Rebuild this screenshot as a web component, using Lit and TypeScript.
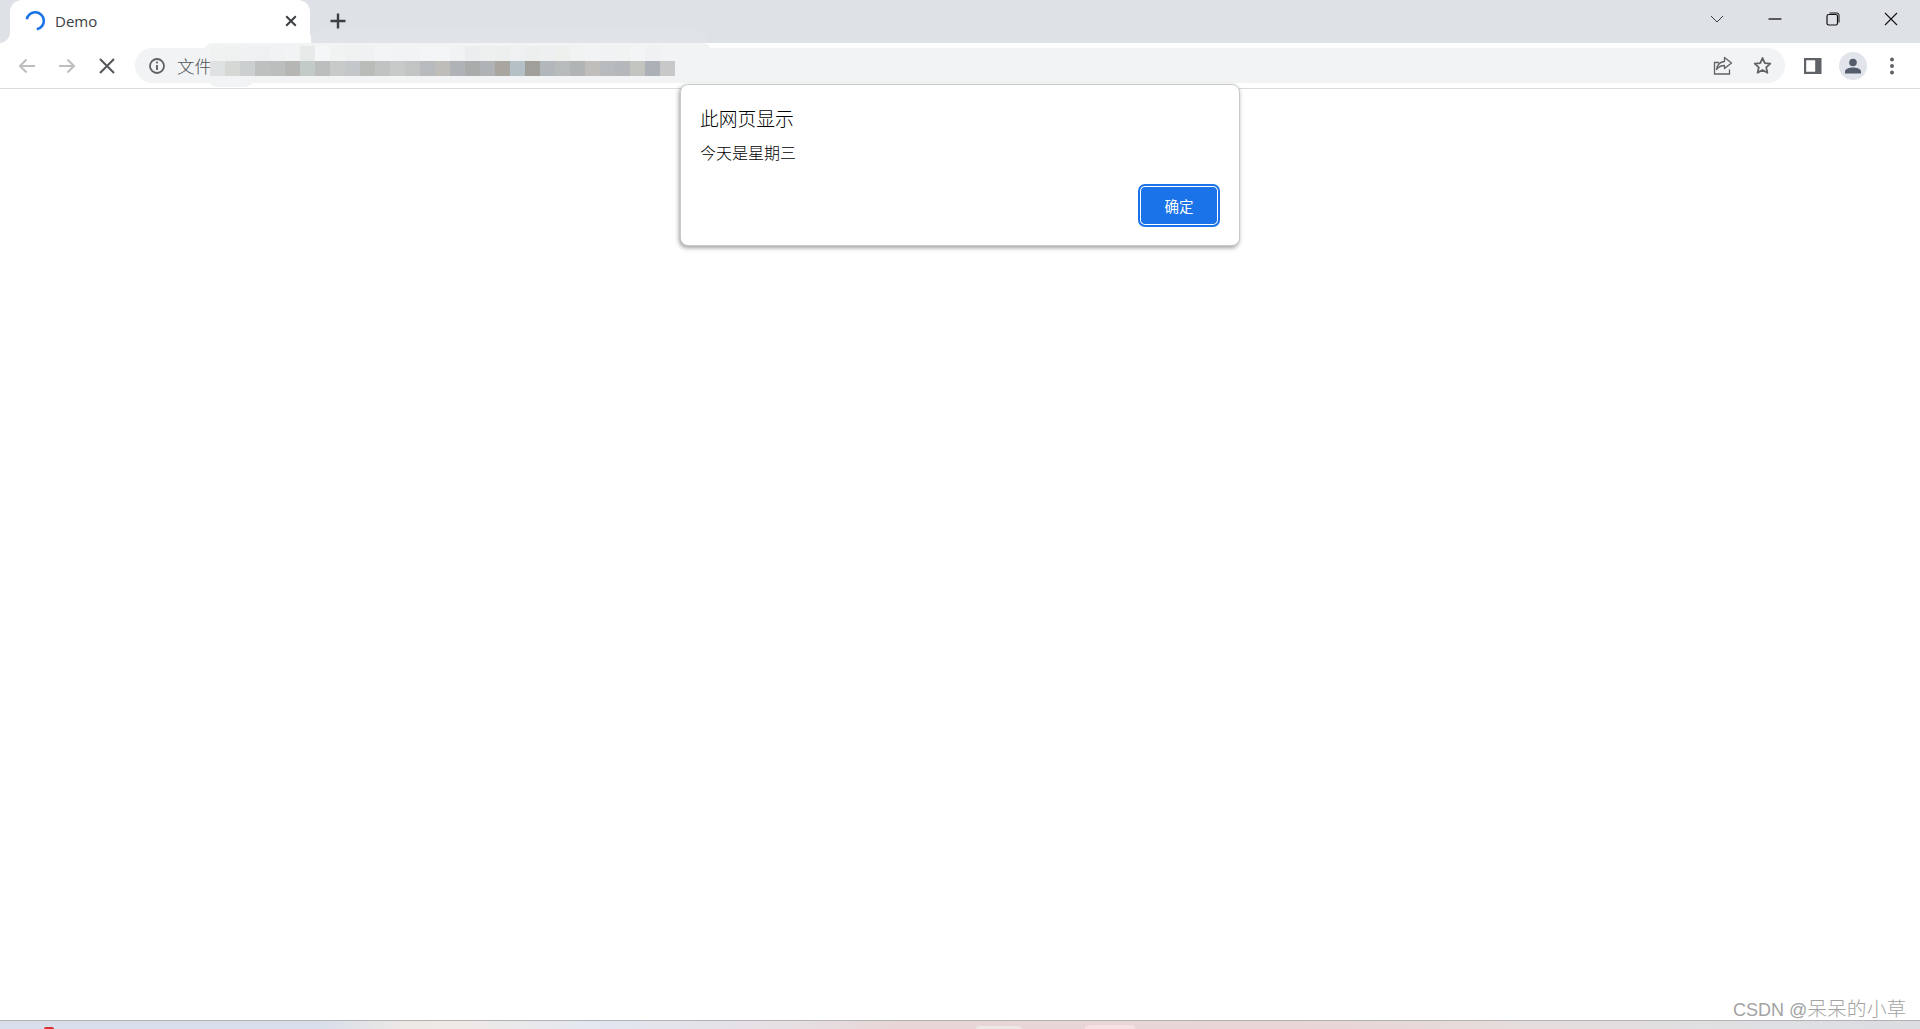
import { LitElement, html, css, svg } from "lit";
import { customElement } from "lit/decorators.js";

const LOWER = ["dfe2e2","d6d8d6","cbcfcf","bdc0be","bcbebe","b6b7b5","c3cbc8","bcbebe","c8caca","c3c7c9","babcba","c1c3c3","c8c9c9","c2c4c3","b8bbbd","bfbdba","afb3b7","aaacac","afb3b6","a8a69f","b5bfc6","a09f9a","b1b7ba","b7bbbb","b1b4b5","c0bebb","b8bbbe","b5b8bb","c2c4c0","acb0b7","c8c8c8"];
const UPPER = ["f0f2f2","eff1f1","eff1f2","eff0f1","f1f2f3","f2f3f4","e8eaea","f5f6f7","f1f3f2","eff1f1","eff1f2","f3f4f5","f2f3f4","f2f3f4","f4f5f6","f4f5f6","f1f2f3","ebedee","eef0f0","edefee","eef0f1","edefee","eeeff0","eef0ee","f1f3f2","f1f3f4","f1f2f3","f1f3f2","f3f4f5","f0f1f2","f1f3f4"];

@customElement("app-root")
export class AppRoot extends LitElement {
  static styles = css`
    :host { display: block; width: 1920px; height: 1029px; position: relative; overflow: hidden; background: #fff; }
    .root { display: flex; flex-direction: column; height: 1029px; font-family: "Open Sans", "Noto Sans CJK SC", sans-serif; }
    svg { display: block; flex: none; }
    .strip { height: 43px; flex: none; background: #dee1e6; display: flex; padding-left: 10px; box-sizing: border-box; }
    .tab { width: 300px; height: 43px; background: #fff; border-radius: 12px 12px 0 0; position: relative; display: flex; align-items: center; padding: 0 11px 1px 14px; box-sizing: border-box; gap: 9px; }
    .tab::before, .tab::after { content: ""; position: absolute; bottom: 0; width: 10px; height: 10px; }
    .tab::before { left: -10px; background: radial-gradient(circle at 0 0, #dee1e6 9.5px, #fff 10px); }
    .tab::after { right: -10px; background: radial-gradient(circle at 100% 0, #dee1e6 9.5px, #fff 10px); }
    .title { flex: 1; font-size: 15px; color: #3c4043; }
    .plus { margin-left: 19px; margin-top: 12px; }
    .winctl { margin-left: auto; display: flex; align-items: center; height: 38px; padding-right: 22px; gap: 44px; }
    .chev { margin-right: 0; }
    .toolbar { height: 45px; flex: none; background: #fff; display: flex; align-items: center; padding: 0 0 0 15px; box-sizing: border-box; }
    .nav { display: flex; gap: 16px; align-items: center; }
    .omni { margin-left: 16px; width: 1650px; height: 35px; background: #f1f3f4; border-radius: 18px; display: flex; align-items: center; padding: 0 0 0 13px; box-sizing: border-box; }
    .scheme { margin-left: 11px; font-size: 17.5px; color: #4f5357; font-family: "Noto Sans CJK SC", sans-serif; font-weight: 300; }
    .omni-end { margin-left: auto; display: flex; align-items: center; gap: 20px; padding-right: 13px; }
    .tools { display: flex; align-items: center; margin-left: 18px; }
    .avatar { margin-left: 16px; width: 28px; height: 28px; border-radius: 50%; background: #e1e4ea; display: flex; align-items: center; justify-content: center; }
    .dots { margin-left: 22px; }
    .rule { height: 1px; flex: none; background: #d9dadc; }
    .page { flex: 1; background: #fff; }
    .taskbar { height: 9px; flex: none; box-sizing: border-box; border-top: 1px solid #b3b3b5; position: relative; overflow: hidden;
      background: linear-gradient(90deg, #d8deea 0, #d8deea 320px, #ece8e6 400px, #f0eae6 450px, #e3e7f1 600px, #e6e0e4 780px, #e8d6d6 900px, #e9d5d5 1300px, #e6dcdc 1500px, #dfe0e3 1750px, #dcdde0 1920px); }
    .pin { position: absolute; border-radius: 4px 4px 0 0; }
    .pin.red { left: 44px; width: 10px; top: 6px; height: 2px; background: #d9352c; border-radius: 2px 2px 0 0; }
    .pin.a { left: 976px; width: 46px; top: 5px; height: 4px; background: #efe7e6; }
    .pin.b { left: 1085px; width: 50px; top: 4px; height: 5px; background: #f8e1e3; }
    .smear { position: absolute; }
    .smear.s1 { left: 311px; top: 30px; width: 395px; height: 13px; background: #e0e3e7; border-radius: 8px 8px 0 0; }
    .smear.s2 { left: 205px; top: 43px; width: 505px; height: 12px; background: #f1f3f4; border-radius: 6px; }
    .smear.s4 { left: 207px; top: 76px; width: 48px; height: 11px; background: #f1f3f4; border-radius: 0 0 14px 14px; }
    .smear.s3 { left: 210px; top: 46px; display: grid; grid-template-columns: repeat(31, 15px); grid-auto-rows: 15px; }
    .dialog { position: absolute; left: 680px; top: 84px; width: 560px; height: 162px; box-sizing: border-box; background: #fff; border-radius: 8px; border: 1px solid #c9cacc; box-shadow: -1px 2px 4px rgba(60,64,67,.5); padding: 20px 19px 18px 19px; display: flex; flex-direction: column; font-family: "Noto Sans CJK SC", sans-serif; color: #000; font-weight: 300; }
    .dlg-title { font-size: 18.8px; line-height: 26px; }
    .dlg-body { font-size: 16px; line-height: 22px; margin-top: 10px; }
    .dlg-actions { margin-top: auto; display: flex; justify-content: flex-end; }
    .ok { width: 78px; height: 39px; box-sizing: border-box; padding: 0; background: #1a73e8; color: #fff; border: 1px solid #fff; outline: 2px solid #1a73e8; outline-offset: 0; border-radius: 5px; font: 400 14.5px "Noto Sans CJK SC", sans-serif; margin: 0 2px 2px 0; }
    .mark { position: absolute; left: 1733px; top: 996px; font-size: 19.8px; line-height: 24px; color: #a3a3a3; font-family: "Noto Sans CJK SC", sans-serif; font-weight: 300; text-shadow: 0 0 1px #fff; }
    .mark .latin { font-family: "Liberation Sans", sans-serif; font-size: 18px; }
  `;

  private icon(w: number, h: number, body: unknown) {
    return html`<svg width=${w} height=${h} viewBox="0 0 ${w} ${h}" fill="none">${body}</svg>`;
  }

  render() {
    return html`
      <div class="root">
        <div class="strip">
          <div class="tab">
            ${this.icon(22, 22, svg`<path d="M2.800 9.200A8.600 8.600 0 1 1 12.800 19.300" stroke="#1a73e8" stroke-width="2.600"/>`)}
            <span class="title">Demo</span>
            ${this.icon(16, 16, svg`<path d="M3.200 3.200l9.600 9.600M12.800 3.200l-9.600 9.600" stroke="#3c4043" stroke-width="2"/>`)}
          </div>
          <div class="plus">${this.icon(18, 18, svg`<path d="M9 1.500v15M1.500 9h15" stroke="#3c4043" stroke-width="2.400"/>`)}</div>
          <div class="winctl">
            ${this.icon(14, 10, svg`<path d="M1 2l6 6 6-6" stroke="#3a3c3f" stroke-width="1"/>`)}
            ${this.icon(14, 4, svg`<path d="M0.500 2h13" stroke="#111" stroke-width="1.300"/>`)}
            ${this.icon(14, 14, svg`<rect x="1" y="2.500" width="10.500" height="10.500" rx="1.800" stroke="#111" stroke-width="1.200"/><path d="M3.500 1h7.500a2 2 0 0 1 2 2v7.500" stroke="#111" stroke-width="1"/>`)}
            ${this.icon(14, 14, svg`<path d="M1 1l12 12M13 1L1 13" stroke="#111" stroke-width="1.100"/>`)}
          </div>
        </div>

        <div class="toolbar">
          <div class="nav">
            ${this.icon(24, 24, svg`<path d="M20 12H5M11.500 5.500L5 12l6.500 6.500" stroke="#bcbec0" stroke-width="2"/>`)}
            ${this.icon(24, 24, svg`<path d="M4 12h15M12.500 5.500L19 12l-6.500 6.500" stroke="#bcbec0" stroke-width="2"/>`)}
            ${this.icon(24, 24, svg`<path d="M5 5l14 14M19 5L5 19" stroke="#55585c" stroke-width="2.100"/>`)}
          </div>
          <div class="omni">
            ${this.icon(18, 18, svg`<circle cx="9" cy="9" r="7" stroke="#5f6368" stroke-width="1.800"/><path d="M9 8v5" stroke="#5f6368" stroke-width="1.900"/><circle cx="9" cy="5.500" r="1.100" fill="#5f6368"/>`)}
            <span class="scheme">文件</span>
            <div class="omni-end">
              ${this.icon(20, 20, svg`<path d="M16.500 13.500v4.500H1.500V6.500H6" stroke="#5f6368" stroke-width="1.300"/><path d="M11.500 1.500l7 5.500-7 5.500V9.500c-3.500 0-6 1.200-8 4 .6-4.300 3.500-7.500 8-8z" stroke="#5f6368" stroke-width="1.300" stroke-linejoin="round"/>`)}
              ${this.icon(19, 19, svg`<path d="M9.500 2l2.300 5.100 5.500.6-4.100 3.700 1.200 5.400-4.900-2.800-4.900 2.800 1.200-5.400L1.700 7.700l5.500-.6z" stroke="#5f6368" stroke-width="1.800" stroke-linejoin="round"/>`)}
            </div>
          </div>
          <div class="tools">
            ${this.icon(20, 18, svg`<path fill-rule="evenodd" d="M1 1h17.500v16H1zM3.200 3.200v11.600h9V3.200z" fill="#5f6368"/>`)}
            <div class="avatar">
              ${this.icon(18, 16, svg`<circle cx="9" cy="4.500" r="3.800" fill="#535d6b"/><path d="M1 15.500v-2c0-2.700 4.700-4 8-4s8 1.300 8 4v2z" fill="#535d6b"/>`)}
            </div>
            <div class="dots">
              ${this.icon(6, 18, svg`<circle cx="3" cy="2.500" r="2" fill="#5f6368"/><circle cx="3" cy="9" r="2" fill="#5f6368"/><circle cx="3" cy="15.500" r="2" fill="#5f6368"/>`)}
            </div>
          </div>
        </div>

        <div class="rule"></div>
        <div class="page"></div>
        <div class="taskbar">
          <div class="pin red"></div>
          <div class="pin a"></div>
          <div class="pin b"></div>
        </div>
      </div>

      <div class="smear s1"></div>
      <div class="smear s2"></div>
      <div class="smear s4"></div>
      <div class="smear s3">
        ${UPPER.map((c) => html`<div style="background:#${c}"></div>`)}
        ${LOWER.map((c) => html`<div style="background:#${c}"></div>`)}
      </div>

      <div class="dialog">
        <div class="dlg-title">此网页显示</div>
        <div class="dlg-body">今天是星期三</div>
        <div class="dlg-actions"><button class="ok">确定</button></div>
      </div>

      <div class="mark"><span class="latin">CSDN @</span>呆呆的小草</div>
    `;
  }
}
